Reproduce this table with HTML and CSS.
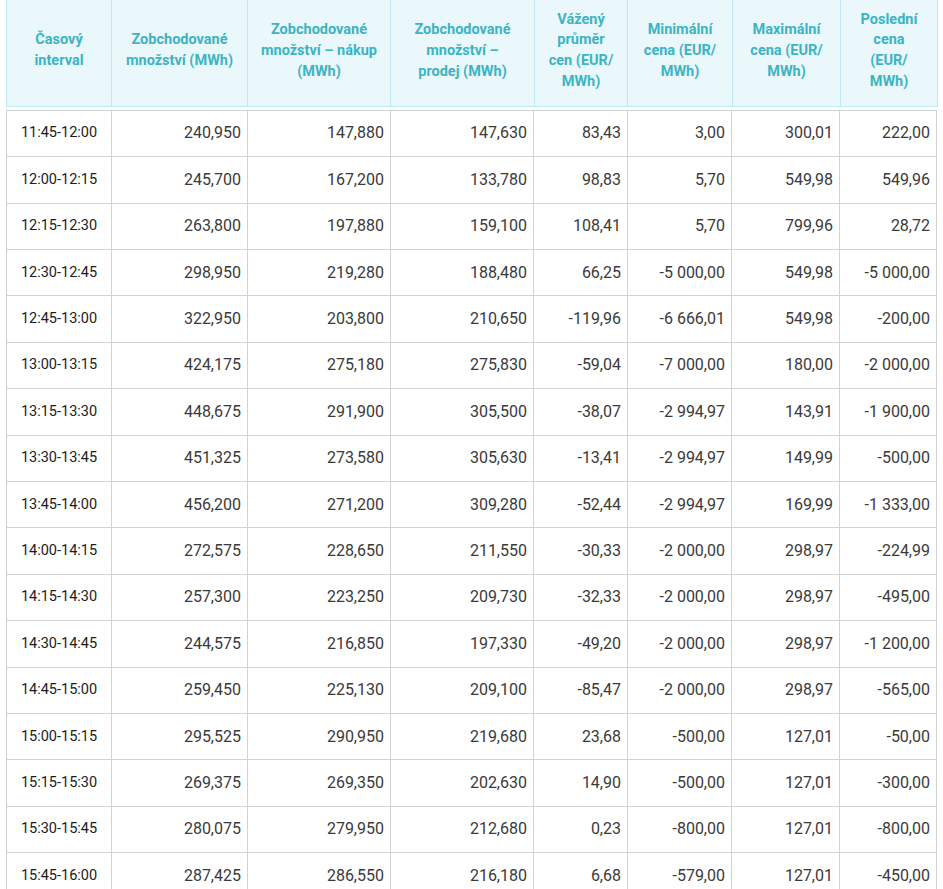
FILE: index.html
```html
<!DOCTYPE html>
<html lang="cs">
<head>
<meta charset="utf-8">
<title>Vnitrodenní trh – výsledky</title>
<link rel="stylesheet" href="styles.css">
</head>
<body>
<div class="wrap">
  <table class="head-table">
    <colgroup>
      <col class="h1"><col class="h2"><col class="h3"><col class="h4"><col class="h5"><col class="h6"><col class="h7"><col class="h8">
    </colgroup>
    <thead>
      <tr>
        <th>Časový<br>interval</th>
        <th>Zobchodované<br>množství (MWh)</th>
        <th>Zobchodované<br>množství – nákup<br>(MWh)</th>
        <th>Zobchodované<br>množství –<br>prodej (MWh)</th>
        <th>Vážený<br>průměr<br>cen (EUR/<br>MWh)</th>
        <th>Minimální<br>cena (EUR/<br>MWh)</th>
        <th>Maximální<br>cena (EUR/<br>MWh)</th>
        <th>Poslední<br>cena<br>(EUR/<br>MWh)</th>
      </tr>
    </thead>
  </table>
  <table class="data-table">
    <colgroup>
      <col class="c1"><col class="c2"><col class="c3"><col class="c4"><col class="c5"><col class="c6"><col class="c7"><col class="c8">
    </colgroup>
    <tbody>
      <tr><td class="time">11:45-12:00</td><td>240,950</td><td>147,880</td><td>147,630</td><td>83,43</td><td>3,00</td><td>300,01</td><td>222,00</td></tr>
      <tr><td class="time">12:00-12:15</td><td>245,700</td><td>167,200</td><td>133,780</td><td>98,83</td><td>5,70</td><td>549,98</td><td>549,96</td></tr>
      <tr><td class="time">12:15-12:30</td><td>263,800</td><td>197,880</td><td>159,100</td><td>108,41</td><td>5,70</td><td>799,96</td><td>28,72</td></tr>
      <tr><td class="time">12:30-12:45</td><td>298,950</td><td>219,280</td><td>188,480</td><td>66,25</td><td>-5&nbsp;000,00</td><td>549,98</td><td>-5&nbsp;000,00</td></tr>
      <tr><td class="time">12:45-13:00</td><td>322,950</td><td>203,800</td><td>210,650</td><td>-119,96</td><td>-6&nbsp;666,01</td><td>549,98</td><td>-200,00</td></tr>
      <tr><td class="time">13:00-13:15</td><td>424,175</td><td>275,180</td><td>275,830</td><td>-59,04</td><td>-7&nbsp;000,00</td><td>180,00</td><td>-2&nbsp;000,00</td></tr>
      <tr><td class="time">13:15-13:30</td><td>448,675</td><td>291,900</td><td>305,500</td><td>-38,07</td><td>-2&nbsp;994,97</td><td>143,91</td><td>-1&nbsp;900,00</td></tr>
      <tr><td class="time">13:30-13:45</td><td>451,325</td><td>273,580</td><td>305,630</td><td>-13,41</td><td>-2&nbsp;994,97</td><td>149,99</td><td>-500,00</td></tr>
      <tr><td class="time">13:45-14:00</td><td>456,200</td><td>271,200</td><td>309,280</td><td>-52,44</td><td>-2&nbsp;994,97</td><td>169,99</td><td>-1&nbsp;333,00</td></tr>
      <tr><td class="time">14:00-14:15</td><td>272,575</td><td>228,650</td><td>211,550</td><td>-30,33</td><td>-2&nbsp;000,00</td><td>298,97</td><td>-224,99</td></tr>
      <tr><td class="time">14:15-14:30</td><td>257,300</td><td>223,250</td><td>209,730</td><td>-32,33</td><td>-2&nbsp;000,00</td><td>298,97</td><td>-495,00</td></tr>
      <tr><td class="time">14:30-14:45</td><td>244,575</td><td>216,850</td><td>197,330</td><td>-49,20</td><td>-2&nbsp;000,00</td><td>298,97</td><td>-1&nbsp;200,00</td></tr>
      <tr><td class="time">14:45-15:00</td><td>259,450</td><td>225,130</td><td>209,100</td><td>-85,47</td><td>-2&nbsp;000,00</td><td>298,97</td><td>-565,00</td></tr>
      <tr><td class="time">15:00-15:15</td><td>295,525</td><td>290,950</td><td>219,680</td><td>23,68</td><td>-500,00</td><td>127,01</td><td>-50,00</td></tr>
      <tr><td class="time">15:15-15:30</td><td>269,375</td><td>269,350</td><td>202,630</td><td>14,90</td><td>-500,00</td><td>127,01</td><td>-300,00</td></tr>
      <tr><td class="time">15:30-15:45</td><td>280,075</td><td>279,950</td><td>212,680</td><td>0,23</td><td>-800,00</td><td>127,01</td><td>-800,00</td></tr>
      <tr><td class="time">15:45-16:00</td><td>287,425</td><td>286,550</td><td>216,180</td><td>6,68</td><td>-579,00</td><td>127,01</td><td>-450,00</td></tr>
    </tbody>
  </table>
</div>
</body>
</html>
```
FILE: styles.css
```css
html, body {
  margin: 0;
  padding: 0;
  background: #ffffff;
}
body {
  font-family: Roboto, "Liberation Sans", Arial, sans-serif;
  overflow: hidden;
}
.wrap {
  padding-left: 6px;
}
table {
  border-collapse: collapse;
  table-layout: fixed;
}
.head-table {
  width: 932px;
}
.head-table th {
  background: #eaf8fc;
  color: #3cb4c3;
  font-weight: 700;
  font-size: 14.5px;
  line-height: 20.8px;
  text-align: center;
  vertical-align: middle;
  border: 1px solid #bfe9f1;
  border-top: none;
  padding: 9.6px 4px 13px;
}
.h1 { width: 105px; }
.h2 { width: 136px; }
.h3 { width: 143px; }
.h4 { width: 144px; }
.h5 { width: 93px; }
.h6 { width: 105px; }
.h7 { width: 108px; }
.h8 { width: 97px; }

.data-table {
  width: 931px;
  margin-top: 3px;
}
.c1 { width: 105px; }
.c2 { width: 136px; }
.c3 { width: 143px; }
.c4 { width: 143px; }
.c5 { width: 94px; }
.c6 { width: 104px; }
.c7 { width: 108px; }
.c8 { width: 97px; }

.data-table td {
  border: 1px solid #d2d2d2;
  font-size: 16px;
  line-height: 22.4px;
  padding: 11.5px 6px 11.5px 4px;
  text-align: right;
  color: #3a3a3a;
  white-space: nowrap;
}
.data-table td.time {
  text-align: center;
  font-size: 14.5px;
  color: #1c1c1c;
  padding-left: 2px;
  padding-right: 2px;
}
```
